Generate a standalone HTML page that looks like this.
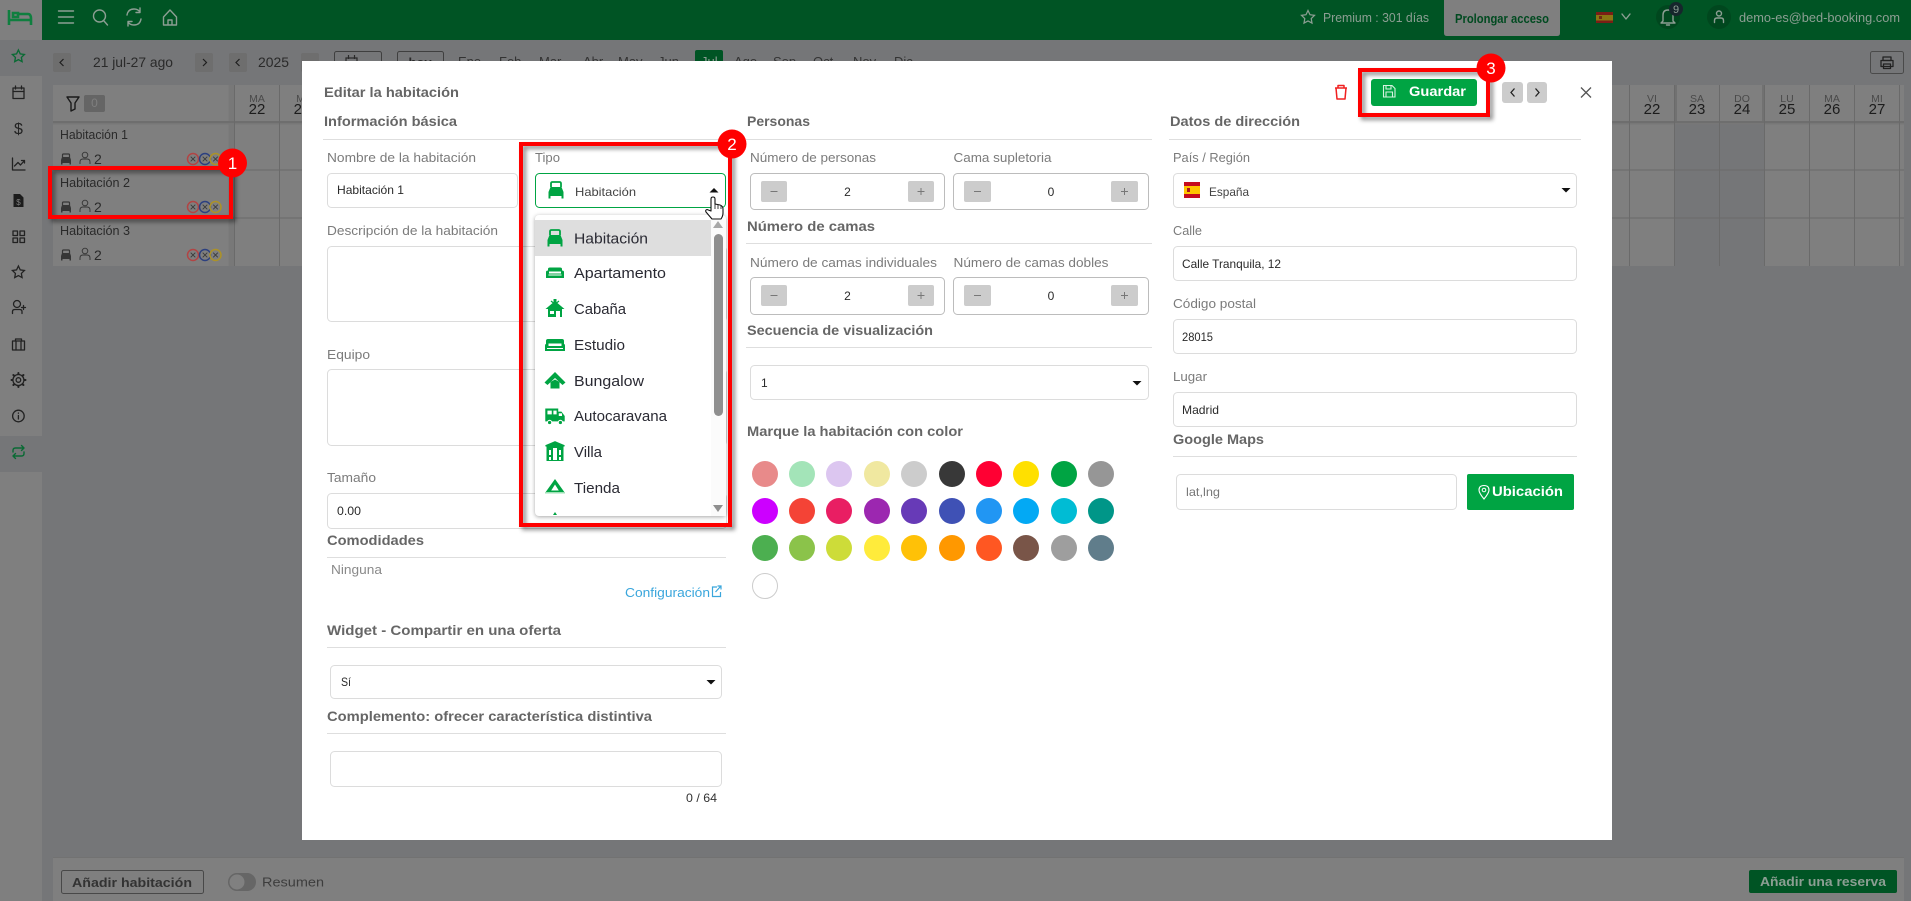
<!DOCTYPE html>
<html lang="es">
<head>
<meta charset="utf-8">
<title>Editar la habitación</title>
<style>
html,body{margin:0;padding:0;background:#757678;overflow:hidden}
svg{display:block}
text{font-family:"Liberation Sans",sans-serif}
.l{font-size:13px;fill:#7b7b7b}
.h{font-size:14px;font-weight:bold;fill:#666}
.i{font-size:12px;fill:#2a2a2a}
.o{font-size:15px;fill:#2a2a33}
.n{font-size:17px;fill:#fff}
.bx{fill:#fff;stroke:#dcdcdc;stroke-width:1}
.st{fill:#fff;stroke:#bcbcbc;stroke-width:1}
.sb{fill:#ccc}
.ln{fill:#dedede}
.red{fill:none;stroke:#f00;stroke-width:4;filter:drop-shadow(3px 3px 2px rgba(0,0,0,.45))}
.dk{fill:none;stroke:#222;stroke-width:1.3;stroke-linecap:round;stroke-linejoin:round}
.tb{fill:none;stroke:#8c9e93;stroke-width:1.4;stroke-linecap:round;stroke-linejoin:round}
.g{fill:#00a443}
</style>
</head>
<body>
<svg xmlns="http://www.w3.org/2000/svg" width="1911" height="901" viewBox="0 0 1911 901">
<defs>
<g id="bed">
<path d="M-5 -3V-6.500Q-5 -8 -3.500 -8H3.500Q5 -8 5 -6.500V-3" fill="none" stroke="#00a443" stroke-width="1.800"/>
<path d="M-5.500 -3H5.500L7.500 2V6H-7.500V2Z" fill="#00a443"/>
<rect x="-7.500" y="6" width="2" height="2.500" fill="#00a443"/><rect x="5.500" y="6" width="2" height="2.500" fill="#00a443"/>
</g>
<g id="sbed">
<path d="M-3.500 -2V-4Q-3.500 -5 -2.500 -5H2.500Q3.500 -5 3.500 -4V-2" fill="none" stroke="#363636" stroke-width="1.200"/>
<path d="M-4 -2H4L5 1V4H-5V1Z" fill="#363636"/>
<rect x="-5" y="4" width="1.500" height="1.500" fill="#363636"/><rect x="3.500" y="4" width="1.500" height="1.500" fill="#363636"/>
</g>
<g id="person"><circle cx="0" cy="-4" r="2.800" fill="none" stroke="#333" stroke-width=".9"/><path d="M-5 5V3Q-5 0 -2 0H2Q5 0 5 3V5" fill="none" stroke="#333" stroke-width=".9"/></g>
<g id="x3"><circle cx="0" cy="0" r="5.500" fill="none" stroke-width="1.500"/><path d="M-2.300 -2.300L2.300 2.300M2.300 -2.300L-2.300 2.300" fill="none" stroke="#3a3a3a" stroke-width=".9"/></g>
<g id="sofa">
<path d="M-9 -1Q-9 -2.500 -7 -2.500V-4Q-7 -5.500 -5 -5.500H5Q7 -5.500 7 -4V-2.500Q9 -2.500 9 -1V5H-9Z" fill="#00a443"/>
<path d="M-6 -1.500H6V0.500H-6Z" fill="#fff"/><path d="M-6.500 2H6.500" stroke="#fff" stroke-width="1"/>
</g>
<g id="min"><path d="M-3.500 0H3.500" stroke="#777" stroke-width="1"/></g>
<g id="plus"><path d="M-3.500 0H3.500M0 -3.500V3.500" stroke="#777" stroke-width="1"/></g>
<path id="down" d="M-4.500 -2H4.500L0 2.500Z" fill="#111"/>
<path id="star" d="M0 -7.500L2.300 -2.600L7.500 -1.900L3.700 1.800L4.600 7L0 4.500L-4.600 7L-3.700 1.800L-7.500 -1.900L-2.300 -2.600Z"/>
</defs>

<!-- page background (dimmed) -->
<rect width="1911" height="901" fill="#757678"/>

<!-- top bar -->
<rect x="0" y="0" width="1911" height="40" fill="#005424"/>
<rect x="0" y="0" width="42" height="40" fill="#7f7f7f"/>
<g fill="none" stroke="#0f7f3f" stroke-width="2.600">
<path d="M9 10V25M9 20H31V25M13 13V17H18V13ZM18 17V14H28Q31 14 31 19"/>
</g>
<path class="tb" d="M58.500 11H73.500M58.500 17H73.500M58.500 23H73.500"/>
<circle class="tb" cx="99.500" cy="16" r="6"/><path class="tb" d="M104 21L107.500 25"/>
<path class="tb" d="M127 15Q128 9 134 9Q138 9 140 12M141 19Q140 25 134 25Q130 25 128 22M140 8V12.500H136M128 26V21.500H132"/>
<path class="tb" d="M163.500 17L170 10L176.500 17V25H163.500ZM168 25V20H172V25"/>

<use href="#star" transform="translate(1308 17) scale(.87)" fill="none" stroke="#8c9e93" stroke-width="1.400"/>
<text x="1323" y="22" font-size="13" fill="#8c9e93" textLength="106" lengthAdjust="spacingAndGlyphs">Premium : 301 días</text>
<path d="M1444 0H1560V33Q1560 36 1557 36H1447Q1444 36 1444 33Z" fill="#7f7f7f"/>
<text x="1455" y="23" font-size="12.500" font-weight="bold" fill="#004a20" textLength="94" lengthAdjust="spacingAndGlyphs">Prolongar acceso</text>
<rect x="1596" y="12" width="17" height="11" fill="#7a1e16"/><rect x="1596" y="15" width="17" height="5.500" fill="#8a7512"/><rect x="1599" y="16" width="3" height="3" fill="#6e2a14"/>
<path class="tb" d="M1622 14L1626 19L1630 14"/>
<circle cx="1668" cy="17" r="12" fill="#00471e"/>
<path class="tb" d="M1663 21V15Q1663 10 1668 10Q1673 10 1673 15V21L1675 23H1661ZM1666.500 25H1669.500"/>
<circle cx="1676" cy="9" r="7" fill="#16262c"/>
<text x="1676" y="13" font-size="11" fill="#8c9e93" text-anchor="middle">9</text>
<circle cx="1719" cy="17" r="12" fill="#00471e"/>
<circle class="tb" cx="1719" cy="13.500" r="2.500"/><path class="tb" d="M1714.500 22.500V20.500Q1714.500 18 1717 18H1721Q1723.500 18 1723.500 20.500V22.500"/>
<text x="1739" y="22" font-size="13" fill="#8c9e93" textLength="161" lengthAdjust="spacingAndGlyphs">demo-es@bed-booking.com</text>

<!-- sidebar -->
<rect x="0" y="40" width="42" height="861" fill="#7f7f7f"/>
<rect x="0" y="40" width="42" height="36" fill="#757678"/>
<rect x="0" y="436" width="42" height="36" fill="#757678"/>
<use href="#star" transform="translate(18.400 56) scale(.8)" fill="none" stroke="#0a6a34" stroke-width="1.700"/>
<g class="dk"><rect x="13" y="88" width="11" height="10.500"/><path d="M13 91.500H24M15.500 86V89M21.500 86V89"/></g>
<text x="18.400" y="134" font-size="16" fill="#222" text-anchor="middle">$</text>
<path class="dk" d="M12.500 158V170H25M14.500 166L18 162.500L20.500 165L24.500 160.500M21.500 160.500H24.500V163"/>
<path d="M13.500 194H20L23.500 197.500V207H13.500Z" fill="#1c1c1c"/><text x="18.500" y="205" font-size="8" fill="#7f7f7f" text-anchor="middle">$</text>
<g class="dk"><rect x="13" y="231" width="4.500" height="4.500"/><rect x="20" y="231" width="4.500" height="4.500"/><rect x="13" y="238" width="4.500" height="4.500"/><rect x="20" y="238" width="4.500" height="4.500"/></g>
<use href="#star" transform="translate(18.400 272) scale(.8)" fill="none" stroke="#222" stroke-width="1.600"/>
<g class="dk"><circle cx="17" cy="304" r="3.500"/><path d="M12.500 313.500V311.500Q12.500 309.500 15 309.500H19.500Q22 309.500 22 311.500V313.500M21.500 307.500H25.500M23.500 305.500V309.500"/></g>
<g class="dk"><rect x="12.500" y="341" width="12" height="9"/><path d="M15.500 341V339H21.500V341M16 341V350M21 341V350"/></g>
<g class="dk"><circle cx="18.400" cy="380" r="2.300"/><circle cx="18.400" cy="380" r="5.500"/><path d="M18.400 374V373M18.400 387V386M24.500 380H25.500M11.500 380H12.500M22.700 375.700L23.400 375M13.400 385L14.100 384.300M22.700 384.300L23.400 385M13.400 375L14.100 375.700" stroke-width="2"/></g>
<g class="dk"><circle cx="18.400" cy="416" r="5.800"/><path d="M18.400 415.500V419M18.400 413V413.200"/></g>
<path d="M13 452V450.500Q13 448 15.500 448H24L21.500 445.500M24 448L21.500 450.500M24 452V453.500Q24 456 21.500 456H13L15.500 458.500M13 456L15.500 453.500" fill="none" stroke="#0a6a34" stroke-width="1.400" stroke-linecap="round" stroke-linejoin="round"/>

<!-- toolbar -->
<g fill="#6e6e6e">
<rect x="53" y="53" width="18" height="19" rx="2"/><rect x="195" y="53" width="18" height="19" rx="2"/><rect x="229" y="53" width="18" height="19" rx="2"/><rect x="301" y="53" width="18" height="19" rx="2"/>
</g>
<path d="M63.500 59L60 62.500L63.500 66M203 59L206.500 62.500L203 66M239.500 59L236 62.500L239.500 66" fill="none" stroke="#1f1f1f" stroke-width="1.200"/>
<text x="93" y="67" font-size="14" fill="#2a2a2a" textLength="80" lengthAdjust="spacingAndGlyphs">21 jul-27 ago</text>
<text x="258" y="67" font-size="14" fill="#2a2a2a" textLength="31" lengthAdjust="spacingAndGlyphs">2025</text>
<rect x="334.500" y="51.500" width="47" height="22" rx="2" fill="none" stroke="#3f3f3f"/>
<rect x="397.500" y="51.500" width="46" height="22" rx="2" fill="none" stroke="#3f3f3f"/>
<path d="M346 58H357V68H346ZM348.500 55V59M354.500 55V59" fill="none" stroke="#2a2a2a" stroke-width="1.200"/>
<text x="420" y="67" font-size="13" font-weight="bold" fill="#2a2a2a" text-anchor="middle">hoy</text>
<rect x="695" y="50" width="28" height="18" rx="2" fill="#005424"/>
<g font-size="13" fill="#333">
<text x="458" y="66">Ene</text><text x="499" y="66">Feb</text><text x="539" y="66">Mar</text><text x="583" y="66">Abr</text><text x="618" y="66">May</text><text x="658" y="66">Jun</text><text x="701" y="66" fill="#8c9e93">Jul</text><text x="734" y="66">Ago</text><text x="773" y="66">Sep</text><text x="813" y="66">Oct</text><text x="853" y="66">Nov</text><text x="894" y="66">Dic</text>
</g>
<rect x="1870.500" y="51.500" width="33" height="22" rx="2" fill="none" stroke="#4a4a4a"/>
<g class="dk"><rect x="1883" y="57" width="8" height="3.500"/><rect x="1881" y="60.500" width="12" height="6"/><rect x="1883.500" y="64" width="7" height="4.500"/></g>

<!-- table -->
<rect x="53" y="85" width="1851" height="181" fill="#7f7f7f"/>
<rect x="1674" y="122" width="90" height="144" fill="#757678"/>
<rect x="228.500" y="85" width="6" height="181" fill="#787878"/>
<rect x="1674" y="85" width="3" height="37" fill="#717171"/><rect x="1762" y="85" width="3" height="37" fill="#717171"/>
<rect x="53" y="121" width="1851" height="2" fill="#6e6e6e"/><rect x="53" y="123" width="1851" height="1.500" fill="#777"/>
<rect x="53" y="169.500" width="1851" height="1" fill="#6a6a6a"/><rect x="53" y="217.500" width="1851" height="1" fill="#6a6a6a"/>
<g fill="#6a6a6a">
<rect x="234" y="85" width="1" height="181"/><rect x="279" y="85" width="1" height="181"/>
<rect x="1629" y="85" width="1" height="181"/><rect x="1674" y="85" width="1" height="181"/><rect x="1719" y="85" width="1" height="181"/><rect x="1764" y="85" width="1" height="181"/><rect x="1809" y="85" width="1" height="181"/><rect x="1854" y="85" width="1" height="181"/><rect x="1899" y="85" width="1" height="181"/>
</g>
<g text-anchor="middle" fill="#4a4a4a" font-size="10.500">
<text x="257" y="102">MA</text><text x="302" y="102">MI</text><text x="1652" y="102">VI</text><text x="1697" y="102">SA</text><text x="1742" y="102">DO</text><text x="1787" y="102">LU</text><text x="1832" y="102">MA</text><text x="1877" y="102">MI</text>
</g>
<g text-anchor="middle" fill="#1c1c1c" font-size="15">
<text x="257" y="114">22</text><text x="302" y="114">23</text><text x="1652" y="114">22</text><text x="1697" y="114">23</text><text x="1742" y="114">24</text><text x="1787" y="114">25</text><text x="1832" y="114">26</text><text x="1877" y="114">27</text>
</g>
<path d="M67 97H79L75 103V109L71 111V103Z" fill="none" stroke="#1a1a1a" stroke-width="1.400" stroke-linejoin="round"/>
<rect x="84" y="95" width="21" height="17" rx="2" fill="#656565"/>
<text x="94.500" y="107" font-size="12" fill="#7f7f7f" text-anchor="middle">0</text>

<g font-size="12.500" fill="#2a2a2a">
<text x="60" y="139" textLength="68" lengthAdjust="spacingAndGlyphs">Habitación 1</text>
<text x="60" y="187" textLength="70" lengthAdjust="spacingAndGlyphs">Habitación 2</text>
<text x="60" y="235" textLength="70" lengthAdjust="spacingAndGlyphs">Habitación 3</text>
</g>
<use href="#sbed" x="66" y="159"/><use href="#person" x="85" y="159"/><text x="94" y="164" font-size="14" fill="#2a2a2a">2</text>
<use href="#sbed" x="66" y="207"/><use href="#person" x="85" y="207"/><text x="94" y="212" font-size="14" fill="#2a2a2a">2</text>
<use href="#sbed" x="66" y="255"/><use href="#person" x="85" y="255"/><text x="94" y="260" font-size="14" fill="#2a2a2a">2</text>
<g><use href="#x3" x="193" y="159" stroke="#b24444"/><use href="#x3" x="205" y="159" stroke="#2c4080"/><use href="#x3" x="215.500" y="159" stroke="#ad9226"/></g>
<g><use href="#x3" x="193" y="207" stroke="#b24444"/><use href="#x3" x="205" y="207" stroke="#2c4080"/><use href="#x3" x="215.500" y="207" stroke="#ad9226"/></g>
<g><use href="#x3" x="193" y="255" stroke="#b24444"/><use href="#x3" x="205" y="255" stroke="#2c4080"/><use href="#x3" x="215.500" y="255" stroke="#ad9226"/></g>

<!-- bottom bar -->
<rect x="53" y="858" width="1851" height="43" fill="#7f7f7f"/>
<rect x="53" y="857" width="1851" height="1" fill="#727272"/>
<rect x="61.500" y="870.500" width="142" height="23" rx="2" fill="none" stroke="#484848"/>
<text x="72" y="887" font-size="13" font-weight="bold" fill="#333" textLength="120" lengthAdjust="spacingAndGlyphs">Añadir habitación</text>
<rect x="228" y="873" width="28" height="18" rx="9" fill="#666"/>
<circle cx="237" cy="882" r="7.500" fill="#808080"/>
<text x="262" y="886.500" font-size="13" fill="#3d3d3d" textLength="62" lengthAdjust="spacingAndGlyphs">Resumen</text>
<rect x="1749" y="870" width="148" height="23" rx="2" fill="#005424"/>
<text x="1760" y="886" font-size="13" font-weight="bold" fill="#8c9e93" textLength="126" lengthAdjust="spacingAndGlyphs">Añadir una reserva</text>

<!-- modal -->
<rect x="302" y="61" width="1310" height="779" fill="#fff"/>

<text class="h" x="324" y="97" textLength="135" lengthAdjust="spacingAndGlyphs">Editar la habitación</text>
<text class="h" x="324" y="126" textLength="133" lengthAdjust="spacingAndGlyphs">Información básica</text>
<rect class="ln" x="323" y="139" width="404" height="1"/>

<text class="l" x="327" y="162" textLength="149" lengthAdjust="spacingAndGlyphs">Nombre de la habitación</text>
<rect class="bx" x="327.500" y="173.500" width="190" height="34" rx="4"/>
<text class="i" x="337" y="194" textLength="67" lengthAdjust="spacingAndGlyphs">Habitación 1</text>

<text class="l" x="327" y="235" textLength="171" lengthAdjust="spacingAndGlyphs">Descripción de la habitación</text>
<rect class="bx" x="327.500" y="246.500" width="399" height="75" rx="4"/>
<text class="l" x="327" y="359" textLength="43" lengthAdjust="spacingAndGlyphs">Equipo</text>
<rect class="bx" x="327.500" y="369.500" width="399" height="76" rx="4"/>
<text class="l" x="327" y="482" textLength="49" lengthAdjust="spacingAndGlyphs">Tamaño</text>
<rect class="bx" x="327.500" y="493.500" width="399" height="35" rx="4"/>
<text class="i" x="337" y="515" textLength="24" lengthAdjust="spacingAndGlyphs">0.00</text>

<text class="h" x="327" y="545" textLength="97" lengthAdjust="spacingAndGlyphs">Comodidades</text>
<rect class="ln" x="327" y="557" width="399" height="1"/>
<text x="331" y="574" font-size="13" fill="#8a8a8a" textLength="51" lengthAdjust="spacingAndGlyphs">Ninguna</text>
<text x="625" y="597" font-size="13" fill="#3aa6dc" textLength="85" lengthAdjust="spacingAndGlyphs">Configuración</text>
<path d="M717 587H712.500V596.500H720.500V592M715.500 592L720.500 586.500M717.500 586H721V589.500" fill="none" stroke="#3aa6dc" stroke-width="1.200"/>

<text class="h" x="327" y="635" textLength="234" lengthAdjust="spacingAndGlyphs">Widget - Compartir en una oferta</text>
<rect class="ln" x="327" y="647" width="399" height="1"/>
<rect class="bx" x="330.500" y="665.500" width="391" height="33" rx="4"/>
<text class="i" x="341" y="686" textLength="10" lengthAdjust="spacingAndGlyphs">Sí</text>
<use href="#down" x="711" y="682"/>
<text class="h" x="327" y="721" textLength="325" lengthAdjust="spacingAndGlyphs">Complemento: ofrecer característica distintiva</text>
<rect class="ln" x="327" y="733" width="399" height="1"/>
<rect class="bx" x="330.500" y="751.500" width="391" height="35" rx="4"/>
<text x="686" y="802" font-size="12" fill="#333" textLength="31" lengthAdjust="spacingAndGlyphs">0 / 64</text>

<!-- Tipo column -->
<text class="l" x="535" y="162" textLength="25" lengthAdjust="spacingAndGlyphs">Tipo</text>
<rect x="535.500" y="173.500" width="190" height="34" rx="4" fill="#fff" stroke="#00a443"/>
<use href="#bed" x="556" y="190"/>
<text class="i" x="575" y="196" style="fill:#444" textLength="61" lengthAdjust="spacingAndGlyphs">Habitación</text>
<path d="M709.500 192.500H718.500L714 188Z" fill="#111"/>

<!-- dropdown -->
<rect x="535" y="215" width="191" height="301" rx="4" fill="#fff" style="filter:drop-shadow(0 1px 2px rgba(0,0,0,.35))"/>
<rect x="535" y="220" width="176" height="36" fill="#dedede"/>
<rect x="711" y="220" width="15" height="296" fill="#fbfbfb"/>
<path d="M713 228H723L718 221Z" fill="#a8a8a8"/>
<rect x="714" y="234" width="9" height="182" rx="4.500" fill="#8f8f8f"/>
<path d="M713 505H723L718 512Z" fill="#8f8f8f"/>

<use href="#bed" x="555" y="238"/>
<use href="#sofa" x="555" y="273"/>
<g transform="translate(555 309)">
<path d="M0 -8L-9.500 0H-7V8H7V0H9.500Z" fill="#00a443"/><rect x="-1.500" y="-10" width="3" height="4" fill="#00a443"/><path d="M-4 -8L-1.500 -6M4 -8L1.500 -6" stroke="#00a443" stroke-width="1.200"/>
<rect x="-5" y="2" width="4" height="3" fill="#fff"/><rect x="1" y="2" width="4" height="6" fill="#fff"/>
</g>
<g transform="translate(555 345)">
<path d="M-7 -6H7Q9 -6 9 -4V-1Q10 -1 10 1V6H-10V1Q-10 -1 -9 -1V-4Q-9 -6 -7 -6Z" fill="#00a443"/>
<path d="M-6.500 -1.500H6.500V1H-6.500Z" fill="#fff"/><path d="M-8 3.500H8" stroke="#fff"/>
</g>
<g transform="translate(555 381)"><path d="M0 -9L10.500 1.500L7.500 4L0 -3L-7.500 4L-10.500 1.500Z" fill="#00a443"/><path d="M-4.500 1L0 -1.500L4.500 1V7.500H-4.500Z" fill="#00a443"/></g>
<g transform="translate(555 416) scale(1.08)">
<path d="M-9 -7H3V-4H6L9 0V5H-9Z" fill="#00a443"/>
<rect x="-7" y="-5" width="4" height="3.500" fill="#fff"/><rect x="-1.500" y="-5" width="3" height="3.500" fill="#fff"/><rect x="3.500" y="-2.500" width="3" height="2.500" fill="#fff"/>
<circle cx="-5" cy="6" r="2" fill="#00a443" stroke="#fff"/><circle cx="5" cy="6" r="2" fill="#00a443" stroke="#fff"/>
</g>
<g transform="translate(555 452)">
<path d="M-8.500 -7L0 -10L8.500 -7V9H-8.500Z" fill="#00a443"/>
<path d="M-6 -2H-4V3H-6ZM4 -2H6V3H4ZM-2 -4H2V8H-2ZM-6 5H-4V8H-6ZM4 5H6V8H4Z" fill="#fff"/>
<path d="M-9.500 -6L0 -10L9.500 -6" fill="none" stroke="#00a443" stroke-width="1.500"/>
</g>
<g transform="translate(555 486)">
<path d="M0 -7L10 7H-10Z" fill="#00a443"/><path d="M0 -1.500L3.800 4.500H-3.800Z" fill="#fff"/><rect x="-10" y="6" width="20" height="1.500" fill="#9ee0b6"/>
</g>
<path d="M555 512L557 515H553Z" fill="#00a443"/>

<text class="o" x="574" y="243.500" textLength="74" lengthAdjust="spacingAndGlyphs">Habitación</text>
<text class="o" x="574" y="278" textLength="92" lengthAdjust="spacingAndGlyphs">Apartamento</text>
<text class="o" x="574" y="314" textLength="52" lengthAdjust="spacingAndGlyphs">Cabaña</text>
<text class="o" x="574" y="350" textLength="51" lengthAdjust="spacingAndGlyphs">Estudio</text>
<text class="o" x="574" y="386" textLength="70" lengthAdjust="spacingAndGlyphs">Bungalow</text>
<text class="o" x="574" y="421" textLength="93" lengthAdjust="spacingAndGlyphs">Autocaravana</text>
<text class="o" x="574" y="457" textLength="28" lengthAdjust="spacingAndGlyphs">Villa</text>
<text class="o" x="574" y="493" textLength="46" lengthAdjust="spacingAndGlyphs">Tienda</text>

<!-- hand cursor -->
<path d="M711 206V199Q711 197 713 197Q715 197 715 199V204L720 205Q723 206 723 209V213Q723 216 721 219H712L706 212Q705 210 707 209.500L711 211Z" fill="#fff" stroke="#111" stroke-width="1.100" stroke-linejoin="round"/>
<path d="M715 204V209M718 205V209M721 206V209" stroke="#111" stroke-width=".8"/>

<!-- Personas column -->
<text class="h" x="747" y="126" textLength="63" lengthAdjust="spacingAndGlyphs">Personas</text>
<rect class="ln" x="746" y="139" width="406" height="1"/>
<text class="l" x="750" y="162" textLength="126" lengthAdjust="spacingAndGlyphs">Número de personas</text>
<text class="l" x="953.500" y="162" textLength="98" lengthAdjust="spacingAndGlyphs">Cama supletoria</text>
<rect class="st" x="750.500" y="173.500" width="194" height="36" rx="4"/>
<rect class="st" x="953.500" y="173.500" width="195" height="36" rx="4"/>
<rect class="sb" x="761" y="181" width="26" height="21" rx="2"/><rect class="sb" x="908" y="181" width="26" height="21" rx="2"/>
<rect class="sb" x="964" y="181" width="27" height="21" rx="2"/><rect class="sb" x="1111" y="181" width="27" height="21" rx="2"/>
<use href="#min" x="774" y="191.500"/><use href="#plus" x="921" y="191.500"/><use href="#min" x="977.500" y="191.500"/><use href="#plus" x="1124.500" y="191.500"/>
<text class="i" x="847.500" y="196" text-anchor="middle">2</text><text class="i" x="1051" y="196" text-anchor="middle">0</text>

<text class="h" x="747" y="231" textLength="128" lengthAdjust="spacingAndGlyphs">Número de camas</text>
<rect class="ln" x="746" y="243" width="406" height="1"/>
<text class="l" x="750" y="267" textLength="187" lengthAdjust="spacingAndGlyphs">Número de camas individuales</text>
<text class="l" x="953.500" y="267" textLength="155" lengthAdjust="spacingAndGlyphs">Número de camas dobles</text>
<rect class="st" x="750.500" y="277.500" width="194" height="37" rx="4"/>
<rect class="st" x="953.500" y="277.500" width="195" height="37" rx="4"/>
<rect class="sb" x="761" y="285" width="26" height="21" rx="2"/><rect class="sb" x="908" y="285" width="26" height="21" rx="2"/>
<rect class="sb" x="964" y="285" width="27" height="21" rx="2"/><rect class="sb" x="1111" y="285" width="27" height="21" rx="2"/>
<use href="#min" x="774" y="295.500"/><use href="#plus" x="921" y="295.500"/><use href="#min" x="977.500" y="295.500"/><use href="#plus" x="1124.500" y="295.500"/>
<text class="i" x="847.500" y="300" text-anchor="middle">2</text><text class="i" x="1051" y="300" text-anchor="middle">0</text>

<text class="h" x="747" y="335" textLength="186" lengthAdjust="spacingAndGlyphs">Secuencia de visualización</text>
<rect class="ln" x="746" y="347" width="406" height="1"/>
<rect class="bx" x="750.500" y="365.500" width="398" height="34" rx="4"/>
<text class="i" x="761" y="387">1</text>
<use href="#down" x="1137" y="383"/>

<text class="h" x="747" y="436" textLength="216" lengthAdjust="spacingAndGlyphs">Marque la habitación con color</text>

<!-- colour swatches -->
<g>
<circle cx="765" cy="474" r="13" fill="#e88a8a"/><circle cx="802" cy="474" r="13" fill="#a3e4b8"/><circle cx="839" cy="474" r="13" fill="#dcc6f0"/><circle cx="877" cy="474" r="13" fill="#f0e8a0"/><circle cx="914" cy="474" r="13" fill="#cccccc"/><circle cx="952" cy="474" r="13" fill="#383838"/><circle cx="989" cy="474" r="13" fill="#ff0033"/><circle cx="1026" cy="474" r="13" fill="#ffe000"/><circle cx="1064" cy="474" r="13" fill="#00a443"/><circle cx="1101" cy="474" r="13" fill="#969696"/>
<circle cx="765" cy="511" r="13" fill="#cc00ff"/><circle cx="802" cy="511" r="13" fill="#f44336"/><circle cx="839" cy="511" r="13" fill="#e91e63"/><circle cx="877" cy="511" r="13" fill="#9c27b0"/><circle cx="914" cy="511" r="13" fill="#673ab7"/><circle cx="952" cy="511" r="13" fill="#3f51b5"/><circle cx="989" cy="511" r="13" fill="#2196f3"/><circle cx="1026" cy="511" r="13" fill="#03a9f4"/><circle cx="1064" cy="511" r="13" fill="#00bcd4"/><circle cx="1101" cy="511" r="13" fill="#009688"/>
<circle cx="765" cy="548" r="13" fill="#4caf50"/><circle cx="802" cy="548" r="13" fill="#8bc34a"/><circle cx="839" cy="548" r="13" fill="#cddc39"/><circle cx="877" cy="548" r="13" fill="#ffeb3b"/><circle cx="914" cy="548" r="13" fill="#ffc107"/><circle cx="952" cy="548" r="13" fill="#ff9800"/><circle cx="989" cy="548" r="13" fill="#ff5722"/><circle cx="1026" cy="548" r="13" fill="#795548"/><circle cx="1064" cy="548" r="13" fill="#9e9e9e"/><circle cx="1101" cy="548" r="13" fill="#607d8b"/>
<circle cx="765" cy="586" r="12.500" fill="#fff" stroke="#ccc"/>
</g>

<!-- Address column -->
<text class="h" x="1170" y="126" textLength="130" lengthAdjust="spacingAndGlyphs">Datos de dirección</text>
<rect class="ln" x="1169" y="139" width="412" height="1"/>
<text class="l" x="1173" y="162" textLength="77" lengthAdjust="spacingAndGlyphs">País / Región</text>
<rect class="bx" x="1173.500" y="173.500" width="403" height="34" rx="4"/>
<rect x="1184" y="182" width="16" height="16" fill="#c60b1e"/><rect x="1184" y="186" width="16" height="8" fill="#ffc400"/><rect x="1187" y="188" width="3" height="4" fill="#ad1519"/>
<text class="i" x="1209" y="196" style="fill:#444" textLength="40" lengthAdjust="spacingAndGlyphs">España</text>
<use href="#down" x="1566" y="190"/>

<text class="l" x="1173" y="235" textLength="29" lengthAdjust="spacingAndGlyphs">Calle</text>
<rect class="bx" x="1173.500" y="246.500" width="403" height="34" rx="4"/>
<text class="i" x="1182" y="268" textLength="99" lengthAdjust="spacingAndGlyphs">Calle Tranquila, 12</text>
<text class="l" x="1173" y="308" textLength="83" lengthAdjust="spacingAndGlyphs">Código postal</text>
<rect class="bx" x="1173.500" y="319.500" width="403" height="34" rx="4"/>
<text class="i" x="1182" y="341" textLength="31" lengthAdjust="spacingAndGlyphs">28015</text>
<text class="l" x="1173" y="381" textLength="34" lengthAdjust="spacingAndGlyphs">Lugar</text>
<rect class="bx" x="1173.500" y="392.500" width="403" height="34" rx="4"/>
<text class="i" x="1182" y="414" textLength="37" lengthAdjust="spacingAndGlyphs">Madrid</text>

<text class="h" x="1173" y="444" textLength="91" lengthAdjust="spacingAndGlyphs">Google Maps</text>
<rect class="ln" x="1173" y="456" width="404" height="1"/>
<rect class="bx" x="1176.500" y="474.500" width="280" height="35" rx="4"/>
<text x="1186" y="496" font-size="12" fill="#777" textLength="34" lengthAdjust="spacingAndGlyphs">lat,lng</text>
<rect x="1467" y="474" width="107" height="36" rx="2" class="g"/>
<path d="M1484 499Q1479 493 1479 490Q1479 485.500 1484 485.500Q1489 485.500 1489 490Q1489 493 1484 499Z" fill="none" stroke="#fff" stroke-width="1.100"/><circle cx="1484" cy="490" r="1.800" fill="none" stroke="#fff"/>
<text x="1492" y="496" font-size="14" font-weight="bold" fill="#fff" textLength="71" lengthAdjust="spacingAndGlyphs">Ubicación</text>

<!-- modal header actions -->
<path d="M1335 88H1347M1338 88V85.500H1344V88M1336 88L1337 99H1345L1346 88" fill="none" stroke="#f02020" stroke-width="1.500" stroke-linejoin="round"/>
<rect x="1371" y="79" width="106" height="27" rx="3" class="g"/>
<path d="M1383.500 85.500H1392L1395 88.500V97H1383.500ZM1386 85.500V89H1391V85.500M1386 97V92H1392.500V97" fill="none" stroke="#d6f2e0" stroke-width="1.100"/>
<text x="1409" y="96" font-size="14" font-weight="bold" fill="#fff" textLength="57" lengthAdjust="spacingAndGlyphs">Guardar</text>
<rect x="1502" y="82" width="21" height="21" rx="3" class="sb"/><rect x="1527" y="82" width="20" height="21" rx="3" class="sb"/>
<path d="M1514.500 88.500L1511 92.500L1514.500 96.500M1535.500 88.500L1539 92.500L1535.500 96.500" fill="none" stroke="#222" stroke-width="1.300"/>
<path d="M1581 87.500L1591 97.500M1591 87.500L1581 97.500" fill="none" stroke="#555" stroke-width="1.300"/>

<!-- annotation frames -->
<rect class="red" x="50" y="168" width="181" height="49"/>
<rect class="red" x="521" y="144" width="209" height="381"/>
<rect class="red" x="1360" y="70" width="128" height="45"/>
<circle cx="232.500" cy="163" r="14.500" fill="#f00"/>
<text class="n" x="232.500" y="169" text-anchor="middle">1</text>
<circle cx="732" cy="144" r="14.500" fill="#f00"/>
<text class="n" x="732" y="150" text-anchor="middle">2</text>
<circle cx="1491" cy="68" r="14.500" fill="#f00"/>
<text class="n" x="1491" y="74" text-anchor="middle">3</text>
</svg>
</body>
</html>
